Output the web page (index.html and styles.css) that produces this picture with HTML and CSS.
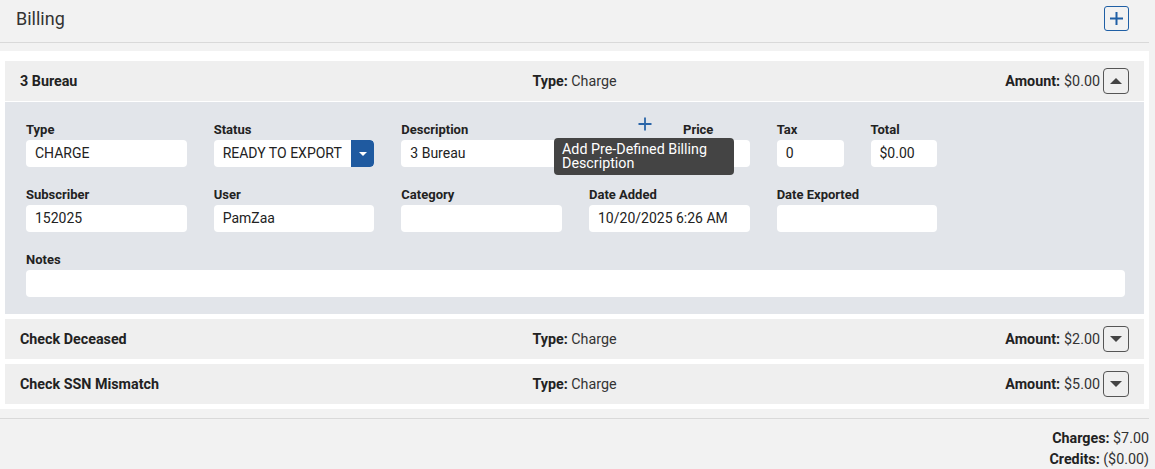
FILE: index.html
```html
<!DOCTYPE html>
<html>
<head>
<meta charset="utf-8">
<link rel="stylesheet" href="styles.css">
</head>
<body>
<div class="page">
  <header class="page-header">
    <h1 class="title">Billing</h1>
    <button class="add-btn" aria-label="Add">
      <svg width="15" height="15" viewBox="0 0 15 15"><path d="M7.5 1v13M1 7.5h13" stroke="#1f5fa5" stroke-width="2" fill="none"/></svg>
    </button>
  </header>

  <section class="panel">
    <div class="row-head">
      <div class="row-title">3 Bureau</div>
      <div class="row-type"><b>Type:</b> Charge</div>
      <div class="row-amount"><b>Amount:</b><span>$0.00</span>
        <button class="toggle"><svg width="14" height="8" viewBox="0 0 14 8"><path d="M1 7L7 1l6 6z" fill="#444"/></svg></button>
      </div>
    </div>
    <div class="detail">
      <div class="grid">
        <div class="field c2"><label>Type</label><div class="input">CHARGE</div></div>
        <div class="field c2"><label>Status</label>
          <div class="input select"><span>READY TO EXPORT</span>
            <span class="caret"><svg width="10" height="6" viewBox="0 0 10 6"><path d="M1 1h8L5 5z" fill="#fff"/></svg></span>
          </div>
        </div>
        <div class="field c2"><label>Description</label><div class="input">3 Bureau</div></div>
        <div class="field c2 price"><label class="price-label">Price</label><div class="input"></div>
          <span class="predef-plus"><svg width="14" height="14" viewBox="0 0 14 14"><path d="M7 0.5v13M0.5 7h13" stroke="#2a65a8" stroke-width="1.8" fill="none"/></svg></span>
          <div class="tooltip">Add Pre-Defined Billing Description</div>
        </div>
        <div class="field c1"><label>Tax</label><div class="input">0</div></div>
        <div class="field c1"><label>Total</label><div class="input">$0.00</div></div>

        <div class="field c2 new-row"><label>Subscriber</label><div class="input">152025</div></div>
        <div class="field c2"><label>User</label><div class="input">PamZaa</div></div>
        <div class="field c2"><label>Category</label><div class="input"></div></div>
        <div class="field c2"><label>Date Added</label><div class="input">10/20/2025 6:26 AM</div></div>
        <div class="field c2"><label>Date Exported</label><div class="input"></div></div>

        <div class="field c12"><label>Notes</label><div class="input"></div></div>
      </div>
    </div>

    <div class="row-head spaced">
      <div class="row-title">Check Deceased</div>
      <div class="row-type"><b>Type:</b> Charge</div>
      <div class="row-amount"><b>Amount:</b><span>$2.00</span>
        <button class="toggle"><svg width="14" height="8" viewBox="0 0 14 8"><path d="M1 1h12L7 7z" fill="#444"/></svg></button>
      </div>
    </div>
    <div class="row-head spaced">
      <div class="row-title">Check SSN Mismatch</div>
      <div class="row-type"><b>Type:</b> Charge</div>
      <div class="row-amount"><b>Amount:</b><span>$5.00</span>
        <button class="toggle"><svg width="14" height="8" viewBox="0 0 14 8"><path d="M1 1h12L7 7z" fill="#444"/></svg></button>
      </div>
    </div>
  </section>

  <footer class="totals">
    <div><b>Charges:</b> $7.00</div>
    <div><b>Credits:</b> ($0.00)</div>
  </footer>
</div>
</body>
</html>
```

FILE: styles.css
```css
* { box-sizing: border-box; }
html, body { margin: 0; padding: 0; }
body {
  background: #f2f2f2;
  font-family: Roboto, "Liberation Sans", Arial, sans-serif;
  color: #222;
  width: 1155px;
  height: 469px;
  overflow: hidden;
}
.page { margin-right: 6px; }
.page-header {
  height: 43px;
  border-bottom: 1px solid #d9d9d9;
  display: flex;
  align-items: center;
  justify-content: space-between;
  padding: 0 20px 0 16px;
}
.title {
  margin: 0;
  font-size: 18px;
  font-weight: 400;
  color: #333;
  position: relative;
  top: -3px;
}
.add-btn {
  width: 25px;
  height: 25px;
  border: 1px solid #1f5fa5;
  border-radius: 3px;
  background: transparent;
  padding: 0;
  display: flex;
  align-items: center;
  justify-content: center;
  position: relative;
  top: -3px;
}
.panel {
  background: #fff;
  margin-top: 8px;
  padding: 10px 5px 5px 5px;
}
.row-head {
  height: 40px;
  background: #efefef;
  display: grid;
  grid-template-columns: 1fr auto 1fr;
  align-items: center;
  padding: 0 15px;
  font-size: 14.3px;
}
.row-head.spaced { margin-top: 5px; }
.row-title { font-weight: 700; color: #222; }
.row-type { color: #333; }
.row-type b, .row-amount b { color: #222; }
.row-amount {
  display: flex;
  align-items: center;
  justify-content: flex-end;
  color: #333;
}
.row-amount b { margin-right: 4px; }
.toggle {
  width: 26px;
  height: 26px;
  margin-left: 3px;
  border: 1px solid #555;
  border-radius: 4px;
  background: transparent;
  padding: 0;
  display: flex;
  align-items: center;
  justify-content: center;
}
.detail {
  background: #e2e5ea;
  margin-top: 1px;
  padding: 19px 19px 17px 21px;
}
.grid {
  display: grid;
  grid-template-columns: repeat(12, 1fr);
  column-gap: 27px;
  row-gap: 19px;
}
.c1 { grid-column: span 1; }
.c2 { grid-column: span 2; }
.new-row { grid-column: 1 / span 2; }
.c12 { grid-column: 1 / -1; }
.field { position: relative; }
.field label {
  display: block;
  font-size: 13px;
  font-weight: 700;
  line-height: 18px;
  margin-bottom: 1px;
  color: #222;
}
.input {
  height: 27px;
  background: #fff;
  border-radius: 4px;
  padding-left: 9px;
  font-size: 14px;
  line-height: 27px;
  color: #222;
  white-space: nowrap;
  overflow: hidden;
}
.select {
  display: flex;
  justify-content: space-between;
  padding-right: 0;
}
.caret {
  width: 23px;
  height: 27px;
  background: #1f5aa0;
  border-radius: 0 4px 4px 0;
  display: flex;
  align-items: center;
  justify-content: center;
}
.price-label { padding-left: 94px; }
.predef-plus {
  position: absolute;
  left: 49px;
  top: -4px;
  width: 14px;
  height: 14px;
  display: flex;
}
.tooltip {
  position: absolute;
  left: -35px;
  top: 17px;
  width: 180px;
  background: #444;
  color: #fff;
  border-radius: 4px;
  font-size: 14.3px;
  line-height: 14px;
  padding: 4px 8px 5px 8px;
  z-index: 5;
}
.totals {
  margin-top: 9px;
  border-top: 1px solid #d9d9d9;
  padding-top: 9px;
  text-align: right;
  font-size: 14.3px;
  line-height: 21px;
  color: #333;
}
.totals b { color: #222; }
```
